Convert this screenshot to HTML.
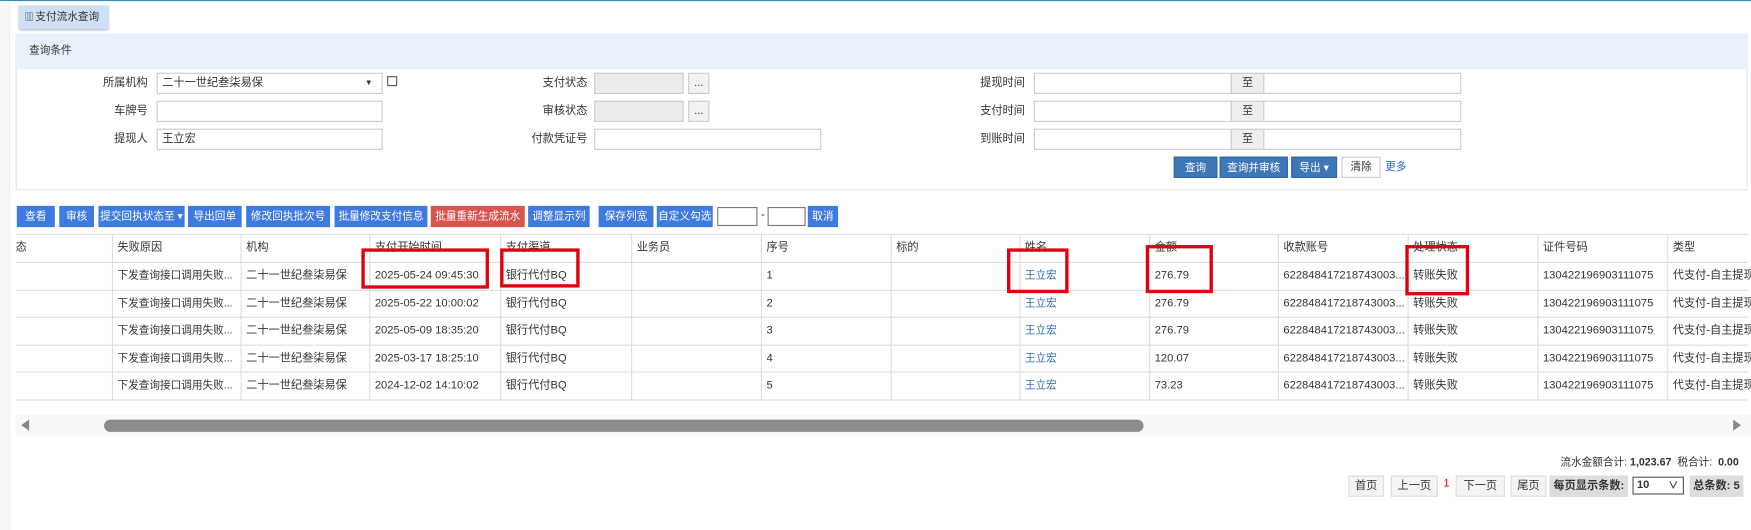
<!DOCTYPE html>
<html><head><meta charset="utf-8"><style>
*{box-sizing:border-box;margin:0;padding:0}
html,body{width:1751px;height:530px;overflow:hidden;background:#fff}
#w{position:absolute;left:0;top:0;width:1565px;height:474px;transform:scale(1.1189);transform-origin:0 0;font-family:"Liberation Sans","Noto Sans CJK SC",sans-serif;font-size:10.5px;color:#333}
.a{position:absolute}
.lbl{position:absolute;text-align:right;width:100px;font-size:10px;color:#333;line-height:19px}
.in{position:absolute;height:19px;border:1px solid #ccc;background:#fff;font-size:10px;line-height:17px;padding-left:4px}
.b{position:absolute;height:19px;line-height:19px;background:#3f7ae0;color:#fff;font-size:9.5px;text-align:center;white-space:nowrap}
.qb{position:absolute;height:19px;line-height:19px;background:#3e77b8;color:#fff;font-size:9.5px;text-align:center;border:1px solid #2f64a0}
.cell{position:absolute;height:25px;line-height:25px;padding-left:5px;white-space:nowrap;overflow:hidden;font-size:10px}
.el{width:114px;text-overflow:ellipsis;padding-right:4px}
.vl{position:absolute;top:209px;width:1px;height:148px;background:#ddd}
.hl{position:absolute;left:14px;width:1548px;height:1px;background:#ddd}
.rb{position:absolute;border:3px solid #e0000f}
.pg{position:absolute;top:425px;height:19px;line-height:17px;border:1px solid #ddd;background:#f4f4f4;font-size:10px;text-align:center}
a{color:#2a6ab8;text-decoration:none}
</style></head><body><div id="w">
<div class="a" style="left:0;top:0;width:1565px;height:1px;background:#3c8dbc"></div>
<div class="a" style="left:0;top:1px;width:9px;height:473px;background:#f8f8f8;border-right:1px solid #eee"></div>
<div class="a" style="left:17px;top:5px;width:80px;height:21px;background:#cfe0f5;box-shadow:0 1px 2px #aab;font-size:9.5px;line-height:21px;padding-left:5px"><span style="font-size:8px;letter-spacing:-1px">▥</span> 支付流水查询</div>
<div class="a" style="left:14px;top:30px;width:1548px;height:140px;border:1px solid #dde6f0"></div>
<div class="a" style="left:14px;top:30px;width:1548px;height:32px;background:#e8f0fb;font-size:9.5px;line-height:32px;padding-left:12px">查询条件</div>

<div class="lbl" style="left:32px;top:65px">所属机构</div>
<div class="in" style="left:140px;top:65px;width:202px">二十一世纪叁柒易保<span style="position:absolute;right:8px;font-size:7px">▼</span></div>
<div class="a" style="left:346px;top:68px;width:9px;height:9px;border:1px solid #555;background:#fff"></div>
<div class="lbl" style="left:32px;top:90px">车牌号</div>
<div class="in" style="left:140px;top:90px;width:202px"></div>
<div class="lbl" style="left:32px;top:115px">提现人</div>
<div class="in" style="left:140px;top:115px;width:202px">王立宏</div>

<div class="lbl" style="left:425px;top:65px">支付状态</div>
<div class="in" style="left:531px;top:65px;width:80px;background:#ebebeb"></div>
<div class="in" style="left:615px;top:65px;width:19px;background:#f2f2f2;padding:0;text-align:center">...</div>
<div class="lbl" style="left:425px;top:90px">审核状态</div>
<div class="in" style="left:531px;top:90px;width:80px;background:#ebebeb"></div>
<div class="in" style="left:615px;top:90px;width:19px;background:#f2f2f2;padding:0;text-align:center">...</div>
<div class="lbl" style="left:425px;top:115px">付款凭证号</div>
<div class="in" style="left:531px;top:115px;width:203px"></div>

<div class="lbl" style="left:816px;top:65px">提现时间</div>
<div class="in" style="left:924px;top:65px;width:177px"></div>
<div class="in" style="left:1100px;top:65px;width:30px;background:#eee;padding:0;text-align:center">至</div>
<div class="in" style="left:1129px;top:65px;width:177px"></div>
<div class="lbl" style="left:816px;top:90px">支付时间</div>
<div class="in" style="left:924px;top:90px;width:177px"></div>
<div class="in" style="left:1100px;top:90px;width:30px;background:#eee;padding:0;text-align:center">至</div>
<div class="in" style="left:1129px;top:90px;width:177px"></div>
<div class="lbl" style="left:816px;top:115px">到账时间</div>
<div class="in" style="left:924px;top:115px;width:177px"></div>
<div class="in" style="left:1100px;top:115px;width:30px;background:#eee;padding:0;text-align:center">至</div>
<div class="in" style="left:1129px;top:115px;width:177px"></div>

<div class="qb" style="left:1049px;top:140px;width:39px">查询</div>
<div class="qb" style="left:1090px;top:140px;width:61px">查询并审核</div>
<div class="qb" style="left:1154px;top:140px;width:41px">导出 ▾</div>
<div class="a" style="left:1199px;top:140px;width:35px;height:19px;border:1px solid #ccc;text-align:center;line-height:17px;font-size:9.5px">清除</div>
<div class="a" style="left:1238px;top:141px;font-size:9.5px;color:#2a6ab8">更多</div>

<div class="b" style="left:15px;top:184px;width:34px">查看</div>
<div class="b" style="left:53px;top:184px;width:31px">审核</div>
<div class="b" style="left:88px;top:184px;width:77px">提交回执状态至 ▾</div>
<div class="b" style="left:168px;top:184px;width:48px">导出回单</div>
<div class="b" style="left:220px;top:184px;width:75px">修改回执批次号</div>
<div class="b" style="left:299px;top:184px;width:83px">批量修改支付信息</div>
<div class="b" style="left:385px;top:184px;width:84px;background:#d9534f">批量重新生成流水</div>
<div class="b" style="left:472px;top:184px;width:55px">调整显示列</div>
<div class="b" style="left:535px;top:184px;width:49px">保存列宽</div>
<div class="b" style="left:587px;top:184px;width:50px">自定义勾选</div>
<div class="a" style="left:641px;top:185px;width:36px;height:17px;border:1px solid #777"></div>
<div class="a" style="left:680px;top:186px">-</div>
<div class="a" style="left:686px;top:185px;width:34px;height:17px;border:1px solid #777"></div>
<div class="b" style="left:722px;top:184px;width:27px">取消</div>

<div class="hl" style="top:209px"></div><div class="hl" style="top:234px"></div><div class="hl" style="top:259px"></div><div class="hl" style="top:283px"></div><div class="hl" style="top:308px"></div><div class="hl" style="top:332px"></div><div class="hl" style="top:357px"></div>
<div class="vl" style="left:100px"></div><div class="vl" style="left:215px"></div><div class="vl" style="left:330px"></div><div class="vl" style="left:447px"></div><div class="vl" style="left:564px"></div><div class="vl" style="left:680px"></div><div class="vl" style="left:796px"></div><div class="vl" style="left:911px"></div><div class="vl" style="left:1027px"></div><div class="vl" style="left:1142px"></div><div class="vl" style="left:1258px"></div><div class="vl" style="left:1374px"></div><div class="vl" style="left:1490px"></div>

<div class="cell" style="left:9px;top:209px">态</div>
<div class="cell" style="left:100px;top:209px">失败原因</div>
<div class="cell" style="left:215px;top:209px">机构</div>
<div class="cell" style="left:330px;top:209px">支付开始时间</div>
<div class="cell" style="left:447px;top:209px">支付渠道</div>
<div class="cell" style="left:564px;top:209px">业务员</div>
<div class="cell" style="left:680px;top:209px">序号</div>
<div class="cell" style="left:796px;top:209px">标的</div>
<div class="cell" style="left:911px;top:209px">姓名</div>
<div class="cell" style="left:1027px;top:209px">金额</div>
<div class="cell" style="left:1142px;top:209px">收款账号</div>
<div class="cell" style="left:1258px;top:209px">处理状态</div>
<div class="cell" style="left:1374px;top:209px">证件号码</div>
<div class="cell" style="left:1490px;top:209px;width:75px">类型</div>

<div id="rows"></div>
<script>
var d=[["2025-05-24 09:45:30","1","276.79",234],["2025-05-22 10:00:02","2","276.79",259],["2025-05-09 18:35:20","3","276.79",283],["2025-03-17 18:25:10","4","120.07",308],["2024-12-02 14:10:02","5","73.23",332]];
var h="";d.forEach(function(r){var t=r[3];
h+='<div class="cell" style="left:100px;top:'+t+'px;font-size:9.5px;width:115px">下发查询接口调用失败...</div>'+
'<div class="cell el" style="left:215px;top:'+t+'px">二十一世纪叁柒易保</div>'+
'<div class="cell" style="left:330px;top:'+t+'px">'+r[0]+'</div>'+
'<div class="cell" style="left:447px;top:'+t+'px">银行代付BQ</div>'+
'<div class="cell" style="left:680px;top:'+t+'px">'+r[1]+'</div>'+
'<div class="cell" style="left:911px;top:'+t+'px;font-size:9.5px"><a>王立宏</a></div>'+
'<div class="cell" style="left:1027px;top:'+t+'px">'+r[2]+'</div>'+
'<div class="cell" style="left:1142px;top:'+t+'px">622848417218743003...</div>'+
'<div class="cell" style="left:1258px;top:'+t+'px">转账失败</div>'+
'<div class="cell" style="left:1374px;top:'+t+'px">130422196903111075</div>'+
'<div class="cell" style="left:1490px;top:'+t+'px;width:75px">代支付-自主提现</div>';});
document.getElementById("rows").innerHTML=h;
</script>

<div class="rb" style="left:323px;top:222px;width:114px;height:36px"></div>
<div class="rb" style="left:447px;top:222px;width:71px;height:35px"></div>
<div class="rb" style="left:900px;top:222px;width:55px;height:40px"></div>
<div class="rb" style="left:1024px;top:219px;width:60px;height:43px"></div>
<div class="rb" style="left:1256px;top:219px;width:57px;height:45px"></div>

<div class="a" style="left:14px;top:371px;width:1551px;height:19px;background:#f8f8f8"></div>
<div class="a" style="left:93px;top:375px;width:929px;height:11px;border-radius:6px;background:#8c8c8c"></div>
<div class="a" style="left:19px;top:375px;width:0;height:0;border-top:5.5px solid transparent;border-bottom:5.5px solid transparent;border-right:7px solid #888"></div>
<div class="a" style="left:1549px;top:375px;width:0;height:0;border-top:5.5px solid transparent;border-bottom:5.5px solid transparent;border-left:7px solid #888"></div>

<div class="a" style="right:11px;top:405px;font-size:9.5px;white-space:nowrap">流水金额合计: <b>1,023.67</b> &nbsp;税合计: &nbsp;<b>0.00</b></div>
<div class="pg" style="left:1205px;width:32px">首页</div>
<div class="pg" style="left:1243px;width:42px">上一页</div>
<div class="a" style="left:1290px;top:427px;color:#e00;font-size:10px">1</div>
<div class="pg" style="left:1301px;width:44px">下一页</div>
<div class="pg" style="left:1350px;width:32px">尾页</div>
<div class="pg" style="left:1385px;width:70px;background:#ddd;border-color:#ddd;font-weight:bold">每页显示条数:</div>
<div class="a" style="left:1459px;top:426px;width:46px;height:16px;border:1px solid #555;font-size:10px;line-height:14px;padding-left:3px;font-weight:bold">10<span style="position:absolute;right:4px;font-size:9px">∨</span></div>
<div class="pg" style="left:1510px;width:48px;background:#ddd;border-color:#ddd;font-weight:bold">总条数: 5</div>
</div></body></html>
